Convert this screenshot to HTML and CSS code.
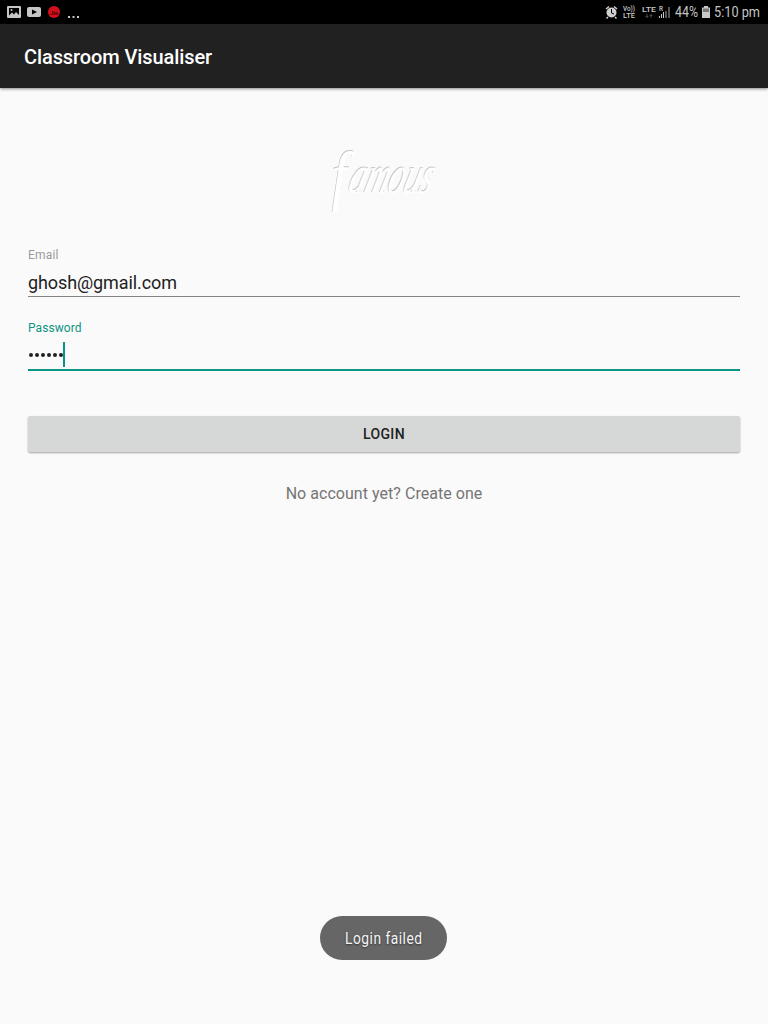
FILE: index.html
```html
<!DOCTYPE html>
<html lang="en">
<head>
<meta charset="utf-8">
<title>Classroom Visualiser</title>
<link rel="stylesheet" href="styles.css">
</head>
<body>
<div class="screen">
  <div class="status">
    <svg class="status-left" width="90" height="24" viewBox="0 0 90 24">
      <rect x="7" y="6" width="14" height="12" rx="1" fill="#c6c6c6"/>
      <path fill="#000" d="M9 8h10v7l-3-3-2 2.500-2-2L9 15.500z"/>
      <circle cx="11.500" cy="10" r="1" fill="#c6c6c6"/>
      <rect x="27" y="7" width="14" height="10" rx="2" fill="#c6c6c6"/>
      <path d="M32 9.500l5 2.500-5 2.500z" fill="#000"/>
      <circle cx="54" cy="12" r="6" fill="#d5101b"/>
      <text class="jio" x="50" y="14.500" textLength="8" lengthAdjust="spacingAndGlyphs">Jio</text>
      <path fill="#c6c6c6" d="M68 16h2v2h-2zM72.500 16h2v2h-2zM77 16h2v2h-2z"/>
    </svg>
    <svg class="status-right" width="168" height="24" viewBox="600 0 168 24">
      <circle cx="611.500" cy="12.500" r="5" fill="#d0d0d0"/>
      <path d="M606 9l3-2.500M617 9l-3-2.500M608 17l-1.500 1.500M615 17l1.500 1.500" stroke="#d0d0d0" stroke-width="1.500"/>
      <path d="M611.500 9v4l2.500 1" stroke="#000" fill="none"/>
      <g class="tiny">
        <text x="623" y="11" textLength="12" lengthAdjust="spacingAndGlyphs">Vo))</text>
        <text x="623" y="18" textLength="12" lengthAdjust="spacingAndGlyphs">LTE</text>
        <text class="lte" x="642" y="12" textLength="14" lengthAdjust="spacingAndGlyphs">LTE</text>
        <text x="659" y="11" textLength="4" lengthAdjust="spacingAndGlyphs">R</text>
      </g>
      <path d="M647 14v4m-1.500-1.500h3M651 18v-4m-1.500 1.500h3" stroke="#484848"/>
      <path d="M659 16h1v2h-1zM661 14h1v4h-1zM663 12h1v6h-1z" fill="#c6c6c6"/>
      <path d="M665 11h2v7h-2zM668 7h2v11h-2z" fill="#555"/>
      <text class="clock" x="675" y="17" textLength="23" lengthAdjust="spacingAndGlyphs">44%</text>
      <path d="M704 6h4v1.500h2V18h-8V7.500h2z" fill="#c8c8c8"/>
      <path d="M703 8.500h6V12h-6z" fill="#777"/>
      <text class="clock" x="714" y="17" textLength="46" lengthAdjust="spacingAndGlyphs">5:10 pm</text>
    </svg>
  </div>
  <header class="bar">Classroom Visualiser</header>
  <main class="form">
    <svg class="logo" width="128" height="80" viewBox="320 140 128 80" role="img" aria-label="famous">
      <g class="logo-edge">
        <text class="logo-f" transform="translate(331 198)" textLength="16" lengthAdjust="spacingAndGlyphs">f</text>
        <text class="logo-rest" transform="translate(346 192) skewX(-16)" textLength="83" lengthAdjust="spacingAndGlyphs">amous</text>
      </g>
      <g class="logo-face" transform="translate(.6 .5)">
        <text class="logo-f" transform="translate(331 198)" textLength="16" lengthAdjust="spacingAndGlyphs">f</text>
        <text class="logo-rest" transform="translate(346 192) skewX(-16)" textLength="83" lengthAdjust="spacingAndGlyphs">amous</text>
      </g>
    </svg>
    <div class="field">
      <div class="label email-label">Email</div>
      <div class="value email">ghosh@gmail.com</div>
    </div>
    <div class="field focused">
      <div class="label">Password</div>
      <div class="value"><span class="dots"><i></i><i></i><i></i><i></i><i></i><i></i></span><span class="caret"></span></div>
    </div>
    <button class="login">LOGIN</button>
    <div class="signup"><span>No account yet? Create one</span></div>
  </main>
  <div class="toast">
    <svg width="127" height="44" viewBox="0 0 127 44">
      <text class="toast-text" x="25" y="28" textLength="77.500" lengthAdjust="spacingAndGlyphs">Login failed</text>
    </svg>
  </div>
</div>
</body>
</html>
```
FILE: styles.css
```css
* { box-sizing: border-box; }
body { margin: 0; font-family: Roboto, sans-serif; background: #fafafa; }
svg { display: block; overflow: visible; }
.screen { width: 768px; height: 1024px; display: flex; flex-direction: column; align-items: center; background: #fafafa; overflow: hidden; }
.status { width: 100%; height: 24px; flex: none; display: flex; justify-content: space-between; background: #000; }
.jio { font-size: 6px; font-weight: 700; fill: #410006; }
.tiny { font-size: 7px; font-weight: 500; fill: #c8c8c8; }
.lte { font-size: 8px; }
.clock { font-size: 15px; fill: #c4c4c4; }
.bar { width: 100%; height: 64px; flex: none; padding: 1px 24px 0; display: flex; align-items: center; background: #212121; color: #fff; font-size: 20px; font-weight: 500; letter-spacing: -.09px; box-shadow: 0 1px 3px rgba(0,0,0,.45); }
.form { width: 100%; padding: 52px 28px 0; flex: 1; display: flex; flex-direction: column; }
.logo { align-self: center; }
.logo text { font-family: "Liberation Serif", serif; font-style: italic; }
.logo .logo-f { font-size: 68px; }
.logo .logo-rest { font-size: 54px; }
.logo-edge { fill: #c4c4c4; }
.logo-face { fill: #fff; }
.field { height: 50px; margin-top: 27px; border-bottom: 1px solid #838383; }
.field.focused { height: 51px; margin-top: 23px; border-bottom: 2px solid #0b9482; }
.label { height: 16px; line-height: 16px; font-size: 12px; letter-spacing: .08px; color: #9b9b9b; }
.email-label { letter-spacing: .2px; }
.focused .label { color: #0b9482; }
.value { height: 32px; padding-top: 8px; line-height: 24px; font-size: 18px; color: #212121; }
.email { letter-spacing: -.1px; }
.focused .value { display: flex; padding-top: 6px; }
.dots { display: flex; gap: 2px; padding: 11px 0 0 1px; }
.dots i { width: 4px; height: 4px; border-radius: 50%; background: #212121; }
.caret { width: 2px; height: 25px; background: #0b9482; }
.login { height: 36px; flex: none; margin-top: 45px; padding: 0; border: 0; border-radius: 2px; background: #d6d8d7; color: #212121; font: 500 14px Roboto, sans-serif; letter-spacing: .35px; box-shadow: 0 1px 2px rgba(0,0,0,.35); }
.signup { margin-top: 32px; line-height: 20px; text-align: center; font-size: 16px; letter-spacing: .04px; color: #757575; }
.toast { width: 127px; height: 44px; flex: none; margin: 0 1px 64px 0; border-radius: 22px; background: #666; }
.toast-text { font-size: 16.5px; letter-spacing: .6px; fill: #f5f5f5; text-shadow: 0 1px 2px #333; }
```
